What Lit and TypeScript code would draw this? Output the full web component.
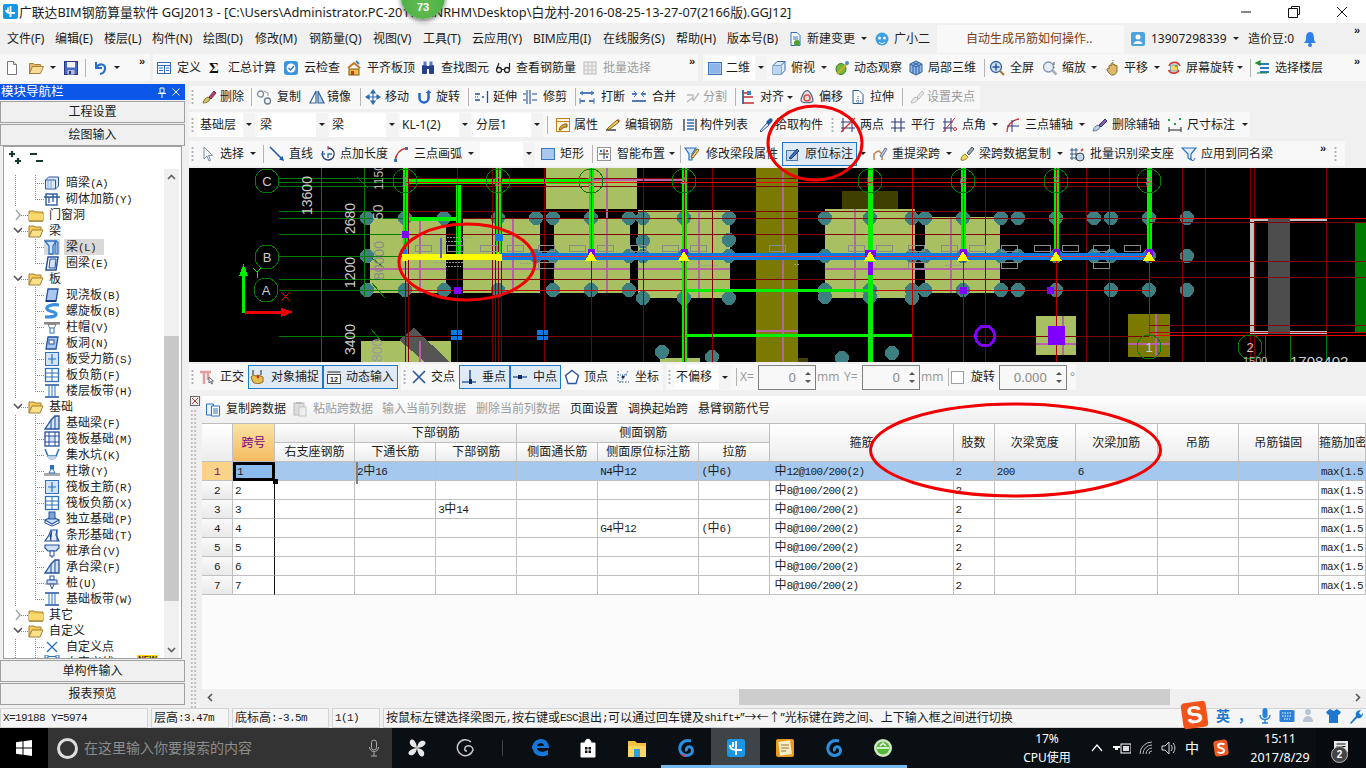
import { LitElement, html, css, TemplateResult } from "lit";
import { customElement } from "lit/decorators.js";
import { unsafeSVG } from "lit/directives/unsafe-svg.js";

const IC: Record<string, string> = {
  new: `<path d="M3.5 1.5h6l3 3v10h-9z" fill="#fff" stroke="#777"/><path d="M9.5 1.5v3h3" fill="#ddd" stroke="#777"/>`,
  open: `<path d="M1.5 13.5v-10h4l1 1h6v2" fill="#e9b860" stroke="#a5803a"/><path d="M1.5 13.5l3-7h11l-3 7z" fill="#f9dd96" stroke="#a5803a"/>`,
  save: `<rect x="1.5" y="1.5" width="13" height="13" fill="#4a68c8" stroke="#26387e"/><rect x="4" y="2" width="8" height="5.5" fill="#f2f2f2"/><rect x="4.5" y="10" width="7" height="4.5" fill="#b9bfd6"/><rect x="6" y="11" width="2" height="3" fill="#26387e"/>`,
  undo: `<path d="M4 2v6h6" fill="none" stroke="#2a6fc8" stroke-width="2"/><path d="M4.5 7.5c3-5 9-3.500 8.500 1.500-.3 3-2.500 4.500-5 5" fill="none" stroke="#2a6fc8" stroke-width="2.200"/>`,
  def: `<rect x="1.500" y="2.500" width="13" height="11" fill="#fff" stroke="#2e6db4"/><path d="M1.500 5.500h13M8.500 5.500v8M3 8h4M3 10.500h4M10 8h3M10 10.500h3" stroke="#2e6db4"/>`,
  sigma: `<text x="8" y="13" font-size="15" font-weight="700" text-anchor="middle" font-family="Liberation Serif" fill="#111">Σ</text>`,
  cloud: `<rect x="1" y="1" width="14" height="14" rx="3" fill="#3c93e0"/><circle cx="8" cy="8" r="4.500" fill="#fff"/><path d="M5.500 8l2 2 3.500-4" fill="none" stroke="#2b7fd0" stroke-width="1.500"/>`,
  flat: `<path d="M2 8l6-5 6 5" fill="none" stroke="#c8771e" stroke-width="2"/><rect x="3" y="9" width="10" height="6" fill="#f0c040" stroke="#7d5a1a"/><rect x="5" y="11" width="3" height="4" fill="#c03a20"/><path d="M10 1l3 3" stroke="#3a80c8" stroke-width="2"/>`,
  find: `<rect x="2" y="5" width="5" height="9" rx="1" fill="#24408f"/><rect x="9" y="5" width="5" height="9" rx="1" fill="#24408f"/><rect x="3.500" y="1.500" width="3" height="4" fill="#5a7ac8"/><rect x="9.500" y="1.500" width="3" height="4" fill="#5a7ac8"/><rect x="6" y="6" width="4" height="3" fill="#24408f"/>`,
  glass: `<circle cx="4" cy="10" r="2.500" fill="none" stroke="#222" stroke-width="1.300"/><circle cx="12" cy="10" r="2.500" fill="none" stroke="#222" stroke-width="1.300"/><path d="M6.500 9.500h3M2 8l2-5M14.500 10V3" stroke="#222" stroke-width="1.200" fill="none"/>`,
  batch: `<rect x="2" y="2" width="12" height="12" fill="#eee" stroke="#bbb"/><path d="M2 6h12M2 10h12M6 2v12M10 2v12" stroke="#c4c4c4"/>`,
  sq: `<rect x="1.500" y="2.500" width="13" height="12" fill="#a8c8f0" stroke="#3c74c4"/><rect x="3" y="4" width="10" height="9" fill="#8db5ea"/>`,
  box3: `<path d="M2 5.500l4-4h8v9l-4 4H2z" fill="#dbe9f8" stroke="#3c6fa8"/><path d="M2 5.500h8v9M10 5.500l4-4" fill="none" stroke="#3c6fa8"/><path d="M2 5.500h8v9H2z" fill="#bcd6f2"/>`,
  orbit: `<ellipse cx="7" cy="9" rx="5" ry="5.500" fill="#76b740" stroke="#3c7a20"/><path d="M3 14L14 3" stroke="#c8b020" stroke-width="2"/><circle cx="13" cy="3" r="2" fill="#4d8fd8"/>`,
  cube: `<path d="M8 1l6 3v8l-6 3-6-3V4z" fill="#8fb8e8" stroke="#33609c"/><path d="M2 4l6 3 6-3M8 7v8M5 2.500l6 3M11 2.500l-6 3M5 5.500v8M11 5.500v8" fill="none" stroke="#33609c"/>`,
  full: `<circle cx="7" cy="7" r="5.500" fill="#cfe0f6" stroke="#31619c" stroke-width="1.300"/><path d="M7 3.500v7M3.500 7h7" stroke="#2455a0" stroke-width="1.500"/><path d="M11 11l4 4" stroke="#a07830" stroke-width="2"/>`,
  zoom: `<circle cx="6.500" cy="7" r="5" fill="#e8eef6" stroke="#8296b4" stroke-width="1.300"/><path d="M10.500 10.500l4 4" stroke="#a8b0b8" stroke-width="2.500"/><path d="M12 2v3M12 7v1" stroke="#555"/>`,
  pan: `<path d="M4 9V6c0-1 2-1 2 0V4c0-1 2-1 2 0v1c0-1 2-1 2 0v1c0-1 2-1 2 0v5c0 2-2 4-4 4-2.500 0-3-1-4-2L2 10c-.6-1 1-2 2-1z" fill="#dfb96a" stroke="#8a6a28"/><path d="M8 0v3" stroke="#555" stroke-dasharray="1 1"/>`,
  spin: `<path d="M3 6a6 6 0 0 1 11 0M13 10A6 6 0 0 1 2.500 10" fill="none" stroke="#d83a30" stroke-width="1.600"/><rect x="4.500" y="5" width="7" height="6" fill="#f4d860" stroke="#80a0c0"/><circle cx="10" cy="6" r="1" fill="#38a038"/>`,
  floor: `<path d="M5 4h9M5 8h9M5 12h9" stroke="#2a7ac0" stroke-width="2"/><path d="M1 3l4-2v4zM2 13h10" stroke="#1e8a30" fill="#1e8a30" stroke-width="1.200"/>`,
  del: `<path d="M2 14c1-3 2-5 5-6l2 2c-1 3-4 4-7 4z" fill="#d8c060" stroke="#8a7a30"/><path d="M8 8l5-6 2 2-5 6z" fill="#c04050" stroke="#5a3a80"/>`,
  copy: `<circle cx="4.500" cy="5" r="3" fill="none" stroke="#7a8aa0" stroke-width="1.300"/><circle cx="11.500" cy="12" r="3" fill="none" stroke="#6a7a90" stroke-width="1.300"/><path d="M8 2l4 2v3" fill="none" stroke="#999"/>`,
  mirror: `<path d="M7 2v12H1z" fill="#fff" stroke="#35639c" stroke-width="1.200"/><path d="M9 2v12h6z" fill="#b9d0ec" stroke="#35639c" stroke-width="1.200"/>`,
  move: `<path d="M8 1v14M1 8h14M8 1L6 4h4zM8 15l-2-3h4zM1 8l3-2v4zM15 8l-3-2v4z" fill="#2e6db4" stroke="#2e6db4" stroke-width="1.200"/>`,
  rot: `<path d="M3.500 4v5a4.500 4.500 0 0 0 9 0V3" fill="none" stroke="#2a68c4" stroke-width="2.500"/><path d="M12.500 1l-3 3h6z" fill="#2a68c4"/>`,
  ext: `<path d="M1 5h5M1 11h5M8 8h2M13.500 2v12" stroke="#20509c" stroke-width="1.300"/><path d="M1 8h4" stroke="#20509c" stroke-dasharray="1 1"/>`,
  trim: `<path d="M8 1v14M5 1v14" stroke="#20509c" stroke-width="1.100"/><path d="M1 5h3M1 11h3M10 5h5M10 11h5" stroke="#20509c"/>`,
  brk: `<path d="M1 4h14M1 12h5M10 12h5" stroke="#20509c" stroke-width="1.300"/><path d="M4 2l-3 2 3 2M12 2l3 2-3 2M1 9v6M15 9v6" fill="none" stroke="#3a80c8"/>`,
  merge: `<path d="M1 12h14M1 5h5M10 5h5" stroke="#20509c" stroke-width="1.300"/><path d="M3 2l3 3-3 3M13 2l-3 3 3 3" fill="none" stroke="#3a80c8"/>`,
  split: `<path d="M2 13l5-4 2 2 5-7M2 6h6v6" fill="none" stroke="#bbb" stroke-width="1.300"/>`,
  align: `<path d="M3 1v14" stroke="#20509c" stroke-width="1.600"/><path d="M3 4h7M3 8h10M3 14h11" stroke="#c03030" stroke-width="1.600"/><rect x="7" y="2" width="4" height="4" fill="#3a80c8"/>`,
  offset: `<path d="M8 1.500c4 1 6 8 6 10 0 3-12 3-12 0 0-2 2-9 6-10z" fill="#f4e0d8" stroke="#4a6a8a" stroke-width="1.200"/><circle cx="8" cy="9" r="3" fill="none" stroke="#d85050" stroke-width="1.500"/>`,
  stretch: `<path d="M3 1.500h6l4 4v9H3z" fill="#fff" stroke="#2b5a94"/><path d="M8 7v7M6 12h5" stroke="#2b5a94" stroke-dasharray="1 1"/>`,
  grip: `<path d="M2 14c1-3 2-5 5-6l2 2c-1 3-4 4-7 4zM8 8l5-6 2 2-5 6z" fill="#e8e8e8" stroke="#bbb"/>`,
  prop: `<rect x="1.500" y="1.500" width="13" height="13" fill="#fff6dc" stroke="#c87f20"/><path d="M1.500 4.500h13" stroke="#c87f20"/><path d="M4 13c1-4 3-6 8-6v3c-3 0-5 1-6 3z" fill="#d8a040" stroke="#806020"/>`,
  edit: `<path d="M1 13h10" stroke="#222" stroke-width="1.300"/><path d="M3 11l9-8 2 2-9 7-3 1z" fill="#f0d050" stroke="#806020"/><path d="M12 3l1-1 2 2-1 1" fill="#c04030"/>`,
  list: `<path d="M2 2v12M14 2v12" stroke="#333" stroke-width="1.300"/><path d="M5 3h7M5 6h7M5 9h7M5 12h7" stroke="#2e6db4" stroke-width="1.500"/>`,
  pick: `<path d="M3 15l-1-1 7-8 2 2z" fill="#dbe9f8" stroke="#2a5a9c"/><path d="M8 5l3-3c2-2 5 1 3 3l-3 3z" fill="#2a5a9c"/>`,
  twop: `<path d="M3 1v14M12 1v14M1 5h14M1 11h14" stroke="#2a3a78"/><path d="M1 15L15 1" stroke="#d03030" stroke-width="1.200"/>`,
  par: `<path d="M5 1v14M11 1v14M1 5h14M1 11h14" stroke="#2a3a78" stroke-width="1.100"/>`,
  ang: `<path d="M3 1v14M9 1v14M1 5h10M1 11h10" stroke="#2a3a78"/><path d="M1 15L13 1" stroke="#d03030"/><circle cx="13" cy="12" r="1.500" fill="none" stroke="#d03030"/>`,
  arcx: `<path d="M1 15c0-7 5-12 12-13" fill="none" stroke="#d03030" stroke-width="1.300"/><path d="M6 3v12M1 9h12" stroke="#2a3a78"/>`,
  delx: `<path d="M1 14c1-3 2-5 5-6l2 2c-1 3-4 4-7 4z" fill="#bcd0e6" stroke="#5a7a9a"/><path d="M7 8l6-6 2 2-6 6z" fill="#7c5fb0" stroke="#3a3a80"/>`,
  dim: `<path d="M2 10v5M14 10v5M2 13h12" stroke="#222"/><rect x="1" y="2" width="2" height="2" fill="#20a040"/><rect x="12" y="1" width="2" height="2" fill="#20a040"/><rect x="7" y="6" width="2" height="2" fill="#20a040"/>`,
  cur: `<path d="M5 1v12l3-3 2 5 1.500-.6-2-5h4z" fill="#fff" stroke="#7a8aa0"/>`,
  line: `<path d="M1 1l12 12" stroke="#1e5aa8" stroke-width="1.600"/><path d="M15 15l-5-1.500 3.500-3.500z" fill="#1e5aa8"/>`,
  ptlen: `<path d="M8 2a6 6 0 1 1-5 3" fill="none" stroke="#2a3a78" stroke-width="1.300"/><path d="M8 0v4" stroke="#d03030"/><path d="M2 8h3M8 12v-4h4" fill="none" stroke="#2e6db4" stroke-width="1.300"/>`,
  arc3: `<path d="M2 15C3 8 7 3 14 2" fill="none" stroke="#c03030" stroke-width="1.500"/><rect x="1" y="13" width="3" height="3" fill="#3a70b0"/><rect x="12" y="1" width="3" height="3" fill="#3a70b0"/>`,
  rect: `<rect x="1.500" y="2.500" width="13" height="11" fill="#a8c8f0" stroke="#3c74c4"/>`,
  smart: `<rect x="1.500" y="1.500" width="13" height="13" fill="#fff" stroke="#333" stroke-dasharray="1 1"/><path d="M8 3v10M3 8h10" stroke="#333"/><rect x="4" y="4" width="2" height="2" fill="#2a70c0"/><rect x="10" y="10" width="2" height="2" fill="#2a70c0"/><rect x="10" y="4" width="2" height="2" fill="#c84040"/>`,
  funp: `<path d="M1 2h11L8 8v6H5V8z" fill="#cfe2f8" stroke="#2a70c0" stroke-width="1.200"/><path d="M7 11l6-8 2 1-6 8z" fill="#f0d050" stroke="#806020"/>`,
  inpos: `<rect x="1.500" y="4.500" width="11" height="10" fill="#c8d8ec" stroke="#4a78b0"/><path d="M4 12l8-9 2 2-8 8z" fill="#3a70c0" stroke="#20406a"/>`,
  relift: `<path d="M2 14V8c2-2 4-3 5-3l3 3v6" fill="none" stroke="#c87f50" stroke-width="1.500"/><path d="M8 10l5-8 2 1-5 8z" fill="#b4c8e4" stroke="#6a7a9a"/>`,
  brush: `<path d="M2 14c0-3 2-5 4-6l3 3c-1 2-4 4-7 3z" fill="#f0d860" stroke="#888020"/><path d="M8 7l5-6 2 2-5 6z" fill="#9aa8b8" stroke="#555"/>`,
  recog: `<path d="M1 4h8M1 8h8M1 12h8M3 2v12M7 2v12" stroke="#345a8c"/><circle cx="11" cy="11" r="4" fill="#c0d4ea" stroke="#444"/><path d="M14 3l-2 2" stroke="#d04040" stroke-width="2"/>`,
  fun: `<path d="M1 2h14l-5 6v6l-3-2 0-4z" fill="#e2eefb" stroke="#2a70c0" stroke-width="1.200"/><path d="M9 12l3 3 2-3" fill="none" stroke="#2a70c0"/>`,
  ortho: `<path d="M1 3h11M5 3v12M9 3v8" stroke="#e0a0a0" stroke-width="2.500" fill="none"/><path d="M10 8v6l1.500-1.500 1 2.500 1-.4-1-2.500h2z" fill="#fff" stroke="#667"/>`,
  snap: `<path d="M3 1v5M11 1v5" stroke="#222"/><path d="M1 8c2-2 3-2 5-1l2-1 5 2v5c-3 2-8 2-10 0z" fill="#e8c050" stroke="#8a6a20"/><circle cx="8" cy="8" r="1.400" fill="#c03030"/>`,
  dyn: `<rect x="1.500" y="2" width="13" height="2" fill="#888"/><rect x="1.500" y="5.500" width="13" height="9" fill="#fff" stroke="#444"/><text x="8" y="13" font-size="7" font-weight="700" text-anchor="middle" font-family="Liberation Sans" fill="#222">12</text>`,
  x: `<path d="M2 2l12 12M14 2L2 14" stroke="#2a5aa0" stroke-width="1.700"/>`,
  perp: `<path d="M1 13h14" stroke="#2a5aa0" stroke-width="1.400"/><path d="M9 1v11" stroke="#2a5aa0" stroke-width="1.600"/><rect x="8" y="10" width="3" height="5" fill="#1a2a60"/>`,
  mid: `<path d="M1 8h14" stroke="#2a5aa0" stroke-width="1.400"/><rect x="6" y="6" width="4" height="4" fill="#1a2a60"/>`,
  vert: `<path d="M8 1.500l6.500 5-2.500 8H4l-2.500-8z" fill="#fff" stroke="#2a5aa0" stroke-width="1.400"/>`,
  coord: `<path d="M3 2v11h11" fill="none" stroke="#2a5aa0" stroke-dasharray="1.500 1.500"/><path d="M13 2L5 14M3 6h10" stroke="#2a5aa0" stroke-dasharray="1 1"/><circle cx="8" cy="8" r="1.500" fill="#1a2a60"/>`,
  doc: `<path d="M4 1.500h6l3 3v10H4z" fill="#fff" stroke="#2a70c0"/><path d="M6 6h5M6 8h5" stroke="#2a70c0"/><circle cx="10" cy="12" r="3" fill="#50a030"/>`,
  bot: `<circle cx="8" cy="8" r="6.500" fill="#3c9fe8"/><circle cx="5.500" cy="7" r="1.500" fill="#fff"/><circle cx="10.500" cy="7" r="1.500" fill="#fff"/><path d="M5 11c2 2 4 2 6 0" stroke="#fff" fill="none"/>`,
  user: `<rect x="1" y="1" width="14" height="14" rx="2" fill="#4ca3dd"/><circle cx="8" cy="6" r="2.500" fill="#fff"/><path d="M3.500 13c.5-4 8.500-4 9 0z" fill="#fff"/>`,
  bell: `<path d="M8 1c3 0 4 3 4 6 0 3 1 4 2 5H2c1-1 2-2 2-5 0-3 1-6 4-6z" fill="#2f80e8"/><circle cx="8" cy="14" r="2" fill="#2f80e8"/>`,
  copyd: `<path d="M1.500 3h7v11h-7z" fill="#e8f1fb" stroke="#2a70c0"/><path d="M6.500 5h8v10h-8z" fill="#fff" stroke="#2a70c0"/><path d="M8 8h5M8 10h5M8 12h5" stroke="#2a70c0"/>`,
  pasted: `<rect x="2" y="2" width="10" height="12" fill="#ddd" stroke="#bbb"/><rect x="7" y="6" width="7" height="9" fill="#eee" stroke="#c4c4c4"/><rect x="4" y="1" width="6" height="2" fill="#bbb"/>`,
  /* tree */
  darkb: `<path d="M1.500 5l3-3h10v9l-3 3h-10z" fill="#dbe7f6" stroke="#2a5a9c"/><path d="M1.500 5h10v9" fill="none" stroke="#2a5a9c"/><path d="M4 5v9M7 5v9" stroke="#7aa4d8"/>`,
  wall: `<rect x="2" y="3" width="11" height="11" fill="#fff" stroke="#2a5a9c" stroke-width="1.400"/><path d="M0 6h16M5 6v6M9 3v8" stroke="#2a5a9c" stroke-width="1.300"/>`,
  fc: `<path d="M1 14V4h5l1 1h8v9z" fill="#f5cc58" stroke="#a08030"/><path d="M1 7h14v7H1z" fill="#f9d96e"/><path d="M1 14h14" stroke="#a08030" stroke-width="1.300"/>`,
  fo: `<path d="M1 14V3h5l1 1h6v3" fill="#f5cc58" stroke="#a08030"/><path d="M1 14l3-7h11l-3 7z" fill="#fbe08a" stroke="#a08030"/>`,
  beam: `<path d="M1 2h11l-3 5v8H5V7z" fill="#cfe2f8" stroke="#2a70c0" stroke-width="1.300"/><path d="M12 2l2 1v12h-3V7z" fill="#8db5ea" stroke="#2a70c0"/>`,
  ring: `<path d="M4 2h10l-2 13H2z" fill="#fff" stroke="#2450a0" stroke-width="1.500"/><path d="M6 4h6l-1 9H5z" fill="#cfe2f8" stroke="#2450a0"/>`,
  slab: `<path d="M4 2h10l-2 12H2z" fill="#a8c8f0" stroke="#2450a0" stroke-width="1.300"/><path d="M2 14h10" stroke="#123a80" stroke-width="2"/>`,
  spiral: `<path d="M15 2C8 1 2 3 3 6s9 2 9 5-5 3-11 3" fill="none" stroke="#3a8ee0" stroke-width="3.200"/>`,
  cap: `<rect x="0" y="3" width="16" height="2.500" fill="#888"/><path d="M4 5.500h8l-2 4H6z" fill="#fff" stroke="#888"/><rect x="6" y="9" width="4" height="5" fill="#fff" stroke="#2a70c0"/>`,
  hole: `<path d="M4 2h10l-2 12H2z" fill="#a8c8f0" stroke="#2450a0" stroke-width="1.300"/><rect x="5" y="5" width="5" height="4" fill="#fff" stroke="#2450a0"/>`,
  rb: `<rect x="1.500" y="1.500" width="13" height="13" fill="#d4e4f8" stroke="#2a70c0"/><path d="M8 3v10M4 8h8" stroke="#2a70c0" stroke-width="1.200"/>`,
  nb: `<rect x="1.500" y="1.500" width="13" height="13" fill="#fff" stroke="#2a70c0" stroke-width="1.300"/><path d="M8 1.500v13M1.500 6h13M1.500 10h13" stroke="#2a70c0"/>`,
  band: `<path d="M1 2h14M1 14h14" stroke="#2450a0" stroke-width="1.600"/><path d="M5 2v12M11 2v12M8 2v12" stroke="#2a70c0"/>`,
  fbeam: `<path d="M1 14l6-9 4-4h4v13z" fill="#cfe2f8" stroke="#2450a0" stroke-width="1.300"/><path d="M7 5v9M11 1v13" stroke="#2450a0"/>`,
  raft: `<rect x="1" y="1" width="14" height="14" fill="#fff" stroke="#2450a0" stroke-width="1.300"/><rect x="5" y="5" width="6" height="6" fill="#cfe2f8" stroke="#2450a0"/><path d="M1 5h4M11 5h4M1 11h4M11 11h4M5 1v4M11 1v4M5 11v4M11 11v4" stroke="#2450a0"/>`,
  pit: `<path d="M1 2l3 7h8l3-7" fill="none" stroke="#2a70c0" stroke-width="1.500"/><path d="M3 9c2 5 8 5 10 0z" fill="#bcd6f2" stroke="#8aa8c8" stroke-dasharray="1 1"/>`,
  pier: `<rect x="0" y="10" width="16" height="3" fill="#aaa"/><path d="M5 10l2-4h2l2 4z" fill="#fff" stroke="#2a70c0"/><rect x="6" y="2" width="4" height="4" fill="#2a70c0"/>`,
  ind: `<path d="M1 9l7-3 7 3-7 4z" fill="#cfe2f8" stroke="#2450a0" stroke-width="1.200"/><path d="M1 9v3l7 3 7-3V9" fill="none" stroke="#2450a0"/><rect x="5" y="1" width="6" height="7" fill="#7aa4d8" stroke="#2450a0"/>`,
  strip: `<path d="M1 14l4-6 2-5h6l-1 5 3 6z" fill="#e2eefb" stroke="#2450a0" stroke-width="1.200"/><path d="M7 14l-1-5 2-5M13 3v11" stroke="#2450a0"/>`,
  cap2: `<path d="M1 2h14v3l-3 3H4L1 5z" fill="#cfe2f8" stroke="#2450a0" stroke-width="1.200"/><rect x="6" y="8" width="4" height="5" fill="#fff" stroke="#2450a0"/><path d="M8 13v2" stroke="#2450a0"/>`,
  pile: `<rect x="6" y="1" width="4" height="4" fill="#fff" stroke="#2450a0"/><path d="M3 5h10v4H3z" fill="#cfe2f8" stroke="#2450a0"/><path d="M6 9h4l-2 5z" fill="#fff" stroke="#2450a0"/><path d="M1 9h14" stroke="#888"/>`,
  cross: `<path d="M3 3l10 10M13 3L3 13" stroke="#2a70c0" stroke-width="1.400"/>`,
  cline: `<rect x="1" y="0" width="3" height="3" fill="none" stroke="#2a70c0"/><rect x="12" y="0" width="3" height="3" fill="none" stroke="#2a70c0"/><path d="M4 1.500h8" stroke="#2a70c0"/>`,
  plus: `<path d="M4 1v6M1 4h6M10 8v6M7 11h6" stroke="#153a2c" stroke-width="2.200"/>`,
  minus: `<path d="M1 4h7M7 11h7" stroke="#153a2c" stroke-width="2.200"/>`,
};

function ic(name: string, size = 16): TemplateResult {
  return html`<svg class="ic" width=${size} height=${size} viewBox="0 0 16 16">${unsafeSVG(IC[name] || "")}</svg>`;
}

const caret = html`<i class="caret"></i>`;

type Atom = any[];
function left(a: Atom): number {
  switch (a[0]) {
    case "i": return a[1] - 8;
    case "c": return a[1] - 3;
    case "d": return a[1] - 2;
    default: return a[1];
  }
}
function atom(a: Atom): TemplateResult {
  switch (a[0]) {
    case "i": return ic(a[2]);
    case "t": return html`<span class=${a[3] ? "dis" : ""}>${a[2]}</span>`;
    case "c": return caret;
    case "s": return html`<i class="sep"></i>`;
    case "d": return html`<i class="dots"></i>`;
    case "o": return html`<span class="more">»</span>`;
    case "f": return html`<span class="combo" style="width:${a[2] - a[1]}px"><span class="field">${a[4] ? ic(a[4]) : ""}${a[3]}</span><span class="drop">${caret}</span></span>`;
    case "b": return html`<span class="box" style="width:${a[2] - a[1]}px">${atoms(a[3], a[1] + 1, a[2] - 1)}</span>`;
    case "n": return html`<span class="num" style="width:${a[2] - a[1]}px"><span>${a[3]}</span><span class="spin"><i class="up"></i><i class="dn"></i></span></span>`;
    case "k": return html`<i class="chk"></i>`;
    default: return html``;
  }
}
function atoms(list: Atom[], start: number, end: number): TemplateResult[] {
  const out: TemplateResult[] = [];
  if (list.length && left(list[0]) > start) out.push(html`<span class="a" style="width:${left(list[0]) - start}px"></span>`);
  list.forEach((a, i) => {
    const w = (i < list.length - 1 ? left(list[i + 1]) : end) - left(a);
    out.push(html`<span class="a" style="width:${w}px">${atom(a)}</span>`);
  });
  return out;
}
type Strip = [number, number, Atom[], string?];
function strips(list: Strip[], start: number): TemplateResult[] {
  let pos = start;
  const out: TemplateResult[] = [];
  for (const [x0, x1, at, cls] of list) {
    if (x0 > pos) out.push(html`<span class="a" style="width:${x0 - pos}px"></span>`);
    out.push(html`<div class="strip ${cls || ""}" style="width:${x1 - x0}px">${atoms(at, x0, x1)}</div>`);
    pos = x1;
  }
  return out;
}

const MENU: Strip[] = [
  [0, 937, [["t", 7, "文件(F)"], ["t", 55, "编辑(E)"], ["t", 104, "楼层(L)"], ["t", 152, "构件(N)"], ["t", 203, "绘图(D)"], ["t", 255, "修改(M)"], ["t", 309, "钢筋量(Q)"], ["t", 373, "视图(V)"], ["t", 423, "工具(T)"], ["t", 472, "云应用(Y)"], ["t", 533, "BIM应用(I)"], ["t", 603, "在线服务(S)"], ["t", 676, "帮助(H)"], ["t", 727, "版本号(B)"], ["i", 795, "doc"], ["t", 807, "新建变更"], ["c", 864], ["i", 882, "bot"], ["t", 894, "广小二"]], "plain"],
  [937, 1124, [["t", 966, "自动生成吊筋如何操作.."]], "tip"],
  [1124, 1366, [["i", 1138, "user"], ["t", 1151, "13907298339"], ["c", 1236], ["t", 1248, "造价豆:0"], ["i", 1310, "bell"], ["o", 1354]], "plain"],
];
const TB1: Strip[] = [
  [0, 150, [["i", 12, "new"], ["i", 36, "open"], ["c", 53], ["i", 71, "save"], ["s", 85], ["i", 100, "undo"], ["c", 117], ["o", 139]]],
  [153, 698, [["i", 164, "def"], ["t", 177, "定义"], ["i", 214, "sigma"], ["t", 228, "汇总计算"], ["i", 291, "cloud"], ["t", 304, "云检查"], ["i", 354, "flat"], ["t", 367, "平齐板顶"], ["i", 428, "find"], ["t", 441, "查找图元"], ["i", 503, "glass"], ["t", 516, "查看钢筋量"], ["i", 590, "batch"], ["t", 603, "批量选择", true], ["o", 689]]],
  [703, 1366, [["f", 705, 767, "二维", "sq"], ["i", 779, "box3"], ["t", 791, "俯视"], ["c", 824], ["i", 842, "orbit"], ["t", 854, "动态观察"], ["i", 916, "cube"], ["t", 928, "局部三维"], ["s", 984], ["i", 997, "full"], ["t", 1010, "全屏"], ["i", 1050, "zoom"], ["t", 1062, "缩放"], ["c", 1094], ["i", 1113, "pan"], ["t", 1124, "平移"], ["c", 1157], ["i", 1174, "spin"], ["t", 1186, "屏幕旋转"], ["c", 1240], ["s", 1250], ["i", 1263, "floor"], ["t", 1275, "选择楼层"], ["o", 1354]]],
];
const R2: Strip[] = [[189, 980, [["d", 193], ["i", 209, "del"], ["t", 220, "删除"], ["s", 251], ["i", 264, "copy"], ["t", 277, "复制"], ["i", 317, "mirror"], ["t", 327, "镜像"], ["s", 360], ["i", 373, "move"], ["t", 385, "移动"], ["i", 424, "rot"], ["t", 436, "旋转"], ["s", 468], ["i", 482, "ext"], ["t", 493, "延伸"], ["i", 530, "trim"], ["t", 543, "修剪"], ["s", 575], ["i", 587, "brk"], ["t", 601, "打断"], ["i", 639, "merge"], ["t", 652, "合并"], ["i", 693, "split"], ["t", 703, "分割", true], ["s", 735], ["i", 748, "align"], ["t", 760, "对齐"], ["c", 790], ["i", 807, "offset"], ["t", 819, "偏移"], ["i", 858, "stretch"], ["t", 870, "拉伸"], ["s", 902], ["i", 917, "grip"], ["t", 927, "设置夹点", true]]]];
const R3: Strip[] = [[189, 1250, [["d", 193], ["f", 198, 255, "基础层"], ["f", 258, 328, "梁"], ["f", 330, 398, "梁"], ["f", 400, 471, "KL-1(2)"], ["f", 474, 543, "分层1"], ["s", 547], ["i", 563, "prop"], ["t", 574, "属性"], ["i", 613, "edit"], ["t", 625, "编辑钢筋"], ["i", 690, "list"], ["t", 700, "构件列表"], ["i", 766, "pick"], ["t", 775, "拾取构件"], ["d", 833], ["i", 848, "twop"], ["t", 860, "两点"], ["i", 898, "par"], ["t", 911, "平行"], ["i", 950, "ang"], ["t", 962, "点角"], ["c", 995], ["i", 1014, "arcx"], ["t", 1025, "三点辅轴"], ["c", 1082], ["i", 1100, "delx"], ["t", 1112, "删除辅轴"], ["i", 1175, "dim"], ["t", 1187, "尺寸标注"], ["c", 1245]]]];
const R4: Strip[] = [[189, 1345, [["d", 193], ["i", 207, "cur"], ["t", 220, "选择"], ["c", 253], ["s", 263], ["i", 277, "line"], ["t", 289, "直线"], ["i", 328, "ptlen"], ["t", 340, "点加长度"], ["i", 401, "arc3"], ["t", 414, "三点画弧"], ["c", 471], ["f", 480, 535, ""], ["i", 548, "rect"], ["t", 560, "矩形"], ["s", 592], ["i", 604, "smart"], ["t", 617, "智能布置"], ["c", 672], ["s", 680], ["i", 692, "funp"], ["t", 706, "修改梁段属性"], ["b", 782, 857, [["i", 793, "inpos"], ["t", 805, "原位标注"]]], ["c", 863], ["i", 880, "relift"], ["t", 892, "重提梁跨"], ["c", 949], ["i", 967, "brush"], ["t", 979, "梁跨数据复制"], ["c", 1060], ["i", 1077, "recog"], ["t", 1090, "批量识别梁支座"], ["i", 1189, "fun"], ["t", 1201, "应用到同名梁"], ["o", 1320], ["d", 1336]]]];
const SNAP: Strip[] = [
  [189, 399, [["d", 193], ["i", 207, "ortho"], ["t", 220, "正交"], ["b", 248, 323, [["i", 258, "snap"], ["t", 271, "对象捕捉"]]], ["b", 323, 398, [["i", 334, "dyn"], ["t", 346, "动态输入"]]]]],
  [401, 663, [["d", 405], ["i", 419, "x"], ["t", 431, "交点"], ["b", 459, 510, [["i", 469, "perp"], ["t", 482, "垂点"]]], ["b", 510, 561, [["i", 520, "mid"], ["t", 533, "中点"]]], ["i", 572, "vert"], ["t", 584, "顶点"], ["i", 623, "coord"], ["t", 635, "坐标"]]],
  [666, 1076, [["d", 670], ["f", 674, 731, "不偏移"], ["s", 736], ["t", 740, "X=", true], ["n", 758, 816, "0"], ["t", 817, "mm", true], ["t", 844, "Y=", true], ["n", 862, 920, "0"], ["t", 921, "mm", true], ["s", 948], ["k", 951], ["t", 971, "旋转"], ["n", 999, 1067, "0.000"], ["t", 1070, "°", true]]],
];
const TT: Strip[] = [[202, 1366, [["i", 213, "copyd"], ["t", 226, "复制跨数据"], ["i", 300, "pasted"], ["t", 313, "粘贴跨数据", true], ["t", 382, "输入当前列数据", true], ["t", 476, "删除当前列数据", true], ["t", 570, "页面设置"], ["t", 628, "调换起始跨"], ["t", 698, "悬臂钢筋代号"]], "grad"]];

function mix(s: string): unknown[] {
  return s.split(/([\x00-\x7f]+)/).map((p, i) => (i % 2 ? html`<span class="m">${p}</span>` : p));
}

/* level (0 group / 1 child), label, icon, opened, extra class */
const TREE: [number, string, string, number?, string?][] = [
  [1, "暗梁(A)", "darkb"], [1, "砌体加筋(Y)", "wall", 0, "last"], [0, "门窗洞", "fc", 0], [0, "梁", "fo", 1], [1, "梁(L)", "beam", 0, "sel"], [1, "圈梁(E)", "ring", 0, "last"],
  [0, "板", "fo", 1], [1, "现浇板(B)", "slab"], [1, "螺旋板(B)", "spiral"], [1, "柱帽(V)", "cap"], [1, "板洞(N)", "hole"], [1, "板受力筋(S)", "rb"], [1, "板负筋(F)", "nb"], [1, "楼层板带(H)", "band", 0, "last"],
  [0, "基础", "fo", 1], [1, "基础梁(F)", "fbeam"], [1, "筏板基础(M)", "raft"], [1, "集水坑(K)", "pit"], [1, "柱墩(Y)", "pier"], [1, "筏板主筋(R)", "rb"], [1, "筏板负筋(X)", "nb"], [1, "独立基础(P)", "ind"], [1, "条形基础(T)", "strip"], [1, "桩承台(V)", "cap2"], [1, "承台梁(F)", "fbeam"], [1, "桩(U)", "pile"], [1, "基础板带(W)", "band", 0, "last"],
  [0, "其它", "fc", 0], [0, "自定义", "fo", 1], [1, "自定义点", "cross"], [1, "自定义线(X)", "cline", 0, "cut"],
];

const COLS = [31, 42, 80, 81, 81, 81, 101, 71, 183, 41, 81, 82, 81, 80, 47];
const S = "中";
const ROWS: string[][] = [
  ["1", "", `2${S}16`, "", "", `N4${S}12`, `(${S}6)`, `${S}12@100/200(2)`, "2", "200", "6", "", "", "max(1.5"],
  ["2", "", "", "", "", "", "", `${S}8@100/200(2)`, "2", "", "", "", "", "max(1.5"],
  ["3", "", "", `3${S}14`, "", "", "", `${S}8@100/200(2)`, "2", "", "", "", "", "max(1.5"],
  ["4", "", "", "", "", `G4${S}12`, `(${S}6)`, `${S}8@100/200(2)`, "2", "", "", "", "", "max(1.5"],
  ["5", "", "", "", "", "", "", `${S}8@100/200(2)`, "2", "", "", "", "", "max(1.5"],
  ["6", "", "", "", "", "", "", `${S}8@100/200(2)`, "2", "", "", "", "", "max(1.5"],
  ["7", "", "", "", "", "", "", `${S}8@100/200(2)`, "2", "", "", "", "", "max(1.5"],
];

function canvas(): string {
  let o = "";
  const r = (x: number, y: number, w: number, h: number, f: string) => (o += `<rect x="${x}" y="${y}" width="${w}" height="${h}" fill="${f}"/>`);
  const l = (x1: number, y1: number, x2: number, y2: number, c: string, w = 1) => (o += `<line x1="${x1}" y1="${y1}" x2="${x2}" y2="${y2}" stroke="${c}" stroke-width="${w}"/>`);
  const SLAB = "#a9c062", OLIVE = "#7a7a00";
  r(756, 168, 42, 194, OLIVE);
  ([[370, 219, 76, 74], [463, 218, 77, 75], [554, 218, 76, 75], [638, 210, 92, 88], [546, 168, 91, 41], [825, 209, 90, 89], [925, 217, 75, 76], [361, 341, 90, 21], [1036, 316, 40, 39], [660, 358, 40, 4]] as number[][]).forEach((a) => r(a[0], a[1], a[2], a[3], SLAB));
  r(842, 191, 56, 18, "#3f3f00");
  r(1128, 314, 42, 43, OLIVE);
  r(798, 358, 10, 4, "#3f3f00");
  o += `<polygon points="399,340 414,328 450,362 425,362" fill="#555"/>`;
  const PINK = "#b562a6";
  l(370, 268.5, 446, 268.5, PINK, 2); l(463, 268.5, 540, 268.5, PINK, 2); l(554, 268.5, 630, 268.5, PINK, 2); l(638, 268.5, 730, 268.5, PINK, 2); l(825, 268.5, 1000, 268.5, PINK, 2);
  l(756, 331, 798, 331, PINK, 2); l(1036, 343.5, 1076, 343.5, PINK, 2); l(1128, 343.5, 1170, 343.5, PINK, 2); l(546, 180, 684, 180, PINK, 2);
  ([[420, 219, 293], [513, 218, 293], [607, 168, 293], [699, 210, 298], [855, 209, 298], [951, 217, 293], [1063, 316, 355], [1156, 314, 357], [783, 168, 362], [420, 341, 362]] as number[][]).forEach((a) => l(a[0], a[1], a[0], a[2], PINK, 2));
  /* pile dots */
  const T = "#3d7f80";
  const c = (x: number, y: number, rx = 7, ry = 7) => (o += `<ellipse cx="${x}" cy="${y}" rx="${rx}" ry="${ry}" fill="${T}"/>`);
  [367, 405, 444, 498, 536, 553, 591, 629, 643, 684, 729, 825, 870, 912, 925, 963, 1001, 1018, 1056, 1094, 1111, 1149, 1187].forEach((x) => c(x, 218));
  [367, 536, 553, 629, 643, 684, 729, 825, 912, 925, 963, 1001, 1018, 1056, 1094, 1111, 1149, 1187].forEach((x) => c(x, 256));
  [367, 405, 444, 498, 553, 591, 629, 825, 870, 912, 925, 963, 1001, 1018, 1056, 1111, 1149, 1187].forEach((x) => c(x, 290));
  [[643, 298], [684, 298], [729, 298], [825, 297], [870, 297], [912, 298], [643, 241], [729, 240], [662, 352], [712, 357], [842, 358], [892, 353]].forEach((a) => c(a[0], a[1]));
  /* dark lines */
  const DR = "#800000", DG = "#007a00", RED = "#f00000", G = "#00f000";
  [178, 186, 211, 218, 234, 279, 290, 336].forEach((y) => { l(279, y + 0.5, 405, y + 0.5, DG); l(405, y + 0.5, 1149, y + 0.5, y === 290 ? "#c00000" : DR); });
  l(279, 182.5, 405, 182.5, DG); l(279, 256.5, 405, 256.5, DG); l(321.5, 168, 321.5, 362, DG); l(364.5, 168, 364.5, 296, DG);
  l(357, 177, 368, 188, DG); l(372, 258, 384, 268, DG); l(372, 283, 385, 298, DG); l(371, 329, 381, 341, DG);
  /* bright green members */
  [[405, 168, 257], [498, 168, 257], [591, 168, 257], [684, 168, 362], [870, 168, 362], [963, 168, 257], [1056, 168, 257], [1149, 168, 257], [458, 185, 255]].forEach((a) => r(a[0] - 2, a[1], 5, a[2] - a[1], G));
  r(405, 179, 186, 5, G); r(405, 217, 54, 4, G); r(684, 289, 188, 3, G); r(684, 334, 228, 3, G);
  [405, 408, 457, 492, 495, 498, 501, 544, 591, 643, 684, 712, 912, 963, 985, 1056, 1086, 1109, 1182, 1205, 1250, 1254, 1326].forEach((x) => l(x + 0.5, 168, x + 0.5, 362, x === 963 || x === 1056 || x === 912 ? "#b00000" : DR));
  l(1265.5, 335, 1265.5, 362, DG); l(1290, 335, 1290, 362, DG); l(1326.5, 335, 1326.5, 362, DG);
  l(405, 182.5, 1149, 182.5, RED);
  /* right hand structure */
  r(1250, 218, 77, 3, "#c0c0c0"); r(1250, 331, 77, 3, "#c0c0c0"); r(1250, 218, 4, 116, "#c0c0c0");
  r(1268, 218, 22, 116, "#4d4d4d");
  r(1355, 222, 11, 111, "#007a00");
  l(1149, 218.5, 1366, 218.5, RED); l(1149, 335.5, 1366, 335.5, RED); l(1149.5, 218, 1149.5, 336, RED);
  [222, 261, 277, 325, 332].forEach((y, i) => l(1149, y + 0.5, 1366, y + 0.5, i === 4 ? "#c00000" : DR));
  /* gray boxes */
  const GB = "#8a8a8a";
  [415, 447, 480, 507, 538, 569, 597, 630, 662, 690, 769, 848, 876, 908, 941, 969, 1001, 1034, 1062, 1093, 1124].forEach((x) => (o += `<rect x="${x + 0.5}" y="245.500" width="16" height="6" fill="none" stroke="${GB}"/>`));
  [538, 908, 1001, 1093].forEach((x) => (o += `<rect x="${x + 0.5}" y="262.500" width="16" height="6" fill="none" stroke="${GB}"/>`));
  /* beam */
  r(500, 253, 650, 7, "#0b78e3");
  r(402, 254, 100, 6, "#ffff00");
  l(502, 256.5, 1150, 256.5, "#f03030");
  /* small annotation marks */
  r(440, 238, 2, 20, "#6060c0");
  [[444, 237, 28], [445, 241, 20], [434, 262, 30], [445, 266, 16], [520, 263, 20], [698, 265, 20], [794, 264, 5], [945, 265, 16]].forEach((a) => (o += `<line x1="${a[0]}" y1="${a[1]}" x2="${a[0] + a[2]}" y2="${a[1]}" stroke="#9a9a9a" stroke-dasharray="2 1"/>`));
  /* column markers */
  const PU = "#8000ff";
  [[405, 234], [457, 290], [963, 252], [1056, 252], [1149, 252], [591, 252], [684, 252], [963, 290], [1050, 290]].forEach((a) => r(a[0] - 3, a[1] - 3, 7, 7, PU));
  r(495, 234, 8, 7, "#0b78e3");
  r(865, 250, 11, 7, PU); r(868, 262, 5, 13, PU);
  [591, 684, 870, 963, 1056, 1149].forEach((x) => {
    o += `<polygon points="${x - 6},261 ${x},251 ${x + 6},261" fill="#ffff00"/>`;
  });
  o += `<polygon points="402,261 405,251 408,261" fill="#ffff00"/><polygon points="496,261 498,251 502,261" fill="#ffff00"/>`;
  r(402, 249, 5, 5, "#0b78e3");
  [[457, 335], [543, 335]].forEach((a) => { r(a[0] - 6, a[1] - 5, 11, 10, "#0b78e3"); l(a[0], a[1] - 5, a[0], a[1] + 5, "#000"); l(a[0] - 6, a[1] + 0.5, a[0] + 5, a[1] + 0.5, "#000"); });
  o += `<ellipse cx="985" cy="336" rx="9.500" ry="10" fill="none" stroke="${PU}" stroke-width="3"/>`;
  r(1048, 326, 17, 19, PU);
  /* axis circles */
  const AX = (x: number, y: number, t: string, rr = 12) => { o += `<circle cx="${x}" cy="${y}" r="${rr}" fill="none" stroke="#007a00"/><text x="${x}" y="${y + 5}" text-anchor="middle" font-size="13" font-family="Liberation Sans" fill="#ccc">${t}</text>`; };
  AX(267, 181, "C", 12); AX(267, 257, "B", 12); AX(266, 290, "A", 12);
  [[405, "1"], [498, "2"], [591, "3"], [684, "4"], [870, "5"], [963, "6"], [1056, "7"], [1149, "8"]].forEach((a) => AX(a[0] as number, 181, `<tspan fill="#a77">${a[1]}</tspan>`, 12));
  AX(1149, 347, "1"); AX(1250, 347, "2");
  const V = (x: number, y: number, t: string, f = "#ccc", fs = 14) => (o += `<text transform="translate(${x} ${y}) rotate(-90)" font-size="${fs}" font-family="Liberation Sans" fill="${f}">${t}</text>`);
  V(312, 215, "13600"); V(355, 234, "2680"); V(355, 288, "1200"); V(355, 355, "3400");
  V(383, 190, "1150", "#b8b8b8", 12); V(383, 220, "50", "#b8b8b8", 14); V(384, 280, "80000", "#8a8a8a", 14); V(382, 362, "800", "#9a9a9a", 14);
  o += `<text x="1243" y="365" font-size="11" font-family="Liberation Sans" fill="#bbb">1500</text><text x="1290" y="367" font-size="15" font-family="Liberation Sans" fill="#ccc">1708402</text>`;
  /* UCS */
  r(242, 275, 3, 38, G); o += `<polygon points="243.500,264 239,276 248,276" fill="${G}"/>`;
  r(245, 311, 38, 3, "#f00000"); o += `<polygon points="293,312 281,308 281,317" fill="#f00000"/>`;
  o += `<path d="M253 268l4 4 4-4M257 272v6" fill="none" stroke="${G}"/><path d="M281 292l9 9M290 292l-9 9" stroke="#f00000"/>`;
  return o;
}

@customElement("app-root")
export class AppRoot extends LitElement {
  static styles = css`
    :host { display: block; position: relative; width: 1366px; height: 768px; overflow: hidden; background: #f0f0f0; color: #1c1c1c; font: 12px/16px "Noto Sans", "Noto Sans CJK SC", sans-serif; }
    .title { height: 23px; background: #fff; display: flex; align-items: center; padding-left: 3px; font-size: 12.8px; white-space: nowrap; box-sizing: border-box; }
    .logo { width: 15px; height: 15px; background: #1797e6; border-radius: 2px; flex: none; color: #fff; display: flex; }
    .ttl { flex: none; width: 1203px; padding-left: 1px; }
    .wbtn { flex: none; width: 48px; display: flex; justify-content: center; }
    .row { display: flex; align-items: center; flex: none; }
    .menu { height: 31px; }
    .tb1 { height: 27px; margin-bottom: 3px; }
    .tb1 .strip { height: 100%; }
    .strip { display: flex; align-items: center; background: #f8f8f8; flex: none; height: calc(100% - 3px); white-space: nowrap; }
    .strip.plain { background: transparent; height: 100%; }
    .strip.tip { background: #f8f8f8; color: #7c3a10; height: 28px; }
    .strip.grad { background: linear-gradient(#fff, #f0f0f0); height: 100%; }
    .a { flex: none; display: flex; align-items: center; height: 100%; white-space: nowrap; }
    .ic { flex: none; display: block; }
    .dis { color: #9c9c9c; }
    .more { font: 700 11px/11px "Liberation Sans"; align-self: flex-start; margin-top: 2px; }
    .caret { display: block; width: 0; height: 0; border: 3px solid transparent; border-top: 3px solid #222; border-bottom: 0; }
    .sep { display: block; width: 1px; height: 18px; background: #b5b5b5; }
    .dots { display: block; width: 3px; height: 16px; background: radial-gradient(circle, #b0b0b0 1px, transparent 1.2px) 0 0/3px 4px; }
    .combo { display: flex; height: 24px; flex: none; }
    .field { flex: 1; background: #fff; padding-left: 2px; display: flex; align-items: center; gap: 3px; }
    .drop { width: 12px; background: #f3f3f3; display: flex; align-items: center; justify-content: center; }
    .box { display: flex; height: 24px; flex: none; border: 1px solid #1e7ac8; background: #dfeaf5; box-sizing: border-box; align-items: center; }
    .num { display: flex; align-items: center; justify-content: flex-end; height: 25px; border: 1px solid #808080; box-sizing: border-box; color: #8a8a8a; font-size: 13px; background: #f8f8f8; }
    .spin { display: flex; flex-direction: column; gap: 5px; width: 14px; align-items: center; margin-left: 5px; }
    .up { border: 3px solid transparent; border-top: 0; border-bottom: 3px solid #555; }
    .dn { border: 3px solid transparent; border-bottom: 0; border-top: 3px solid #555; }
    .chk { display: block; width: 11px; height: 11px; border: 1px solid #a0a0a0; background: #fff; }
    .main { height: 624px; display: flex; }
    .nav { width: 185px; flex: none; display: flex; flex-direction: column; height: 621px; }
    .navh { height: 16px; flex: none; background: #0a57e8; color: #fff; display: flex; align-items: center; padding-left: 1px; font-size: 12.500px; }
    .navh span { flex: 1; }
    .navh svg { margin-right: 4px; }
    .nbtn { flex: none; background: #f0f0f0; border: 1px solid #a0a0a0; display: flex; align-items: center; justify-content: center; margin-top: 1px; box-sizing: border-box; height: 22px; }
    .tree { flex: 1; min-height: 0; margin: 0 3px 0 3px; border: 1px solid #a0a0a0; background: #fff; display: flex; flex-direction: column; overflow: hidden; }
    .ttools { height: 22px; flex: none; display: flex; align-items: center; padding-left: 4px; gap: 5px; }
    .tbody { flex: 1; min-height: 0; display: flex; }
    .tlist { flex: 1; overflow: hidden; padding-top: 6px; min-width: 0; }
    .tsb { width: 15px; flex: none; background: #f0f0f0; margin-right: 2px; display: flex; flex-direction: column; align-items: center; position: relative; }
    .tsb .sarrow { height: 16px; display: flex; align-items: center; flex: none; }
    .thumb { position: absolute; top: 167px; left: 0; width: 15px; height: 265px; background: #c8c8c8; }
    .tfill { flex: 1; }
    .tr { height: 16px; display: flex; align-items: center; white-space: nowrap; background-repeat: no-repeat; }
    .m { font: 11px "Liberation Mono", monospace; letter-spacing: -.6px; }
    .lv0 { padding-left: 6px; background-image: repeating-linear-gradient(to right, #888 0 1px, transparent 1px 2px); background-size: 9px 1px; background-position: 15px 50%; }
    .lv0 .chev { width: 16px; flex: none; display: block; }
    .lv0 .ic { margin-left: 2px; margin-right: 5px; }
    .lv1 { padding-left: 40px; background-image: repeating-linear-gradient(to bottom, #888 0 1px, transparent 1px 2px), repeating-linear-gradient(to right, #888 0 1px, transparent 1px 2px), repeating-linear-gradient(to bottom, #888 0 1px, transparent 1px 2px); background-size: 1px 100%, 9px 1px, 1px 100%; background-position: 31px 0, 31px 50%, 11px 0; }
    .lv1.last { background-size: 1px 50%, 9px 1px, 1px 100%; }
    .lv1.cut { align-items: flex-start; }
    .lv1 .ic { margin-right: 4px; }
    .lv1 .lb { padding: 0 2px; }
    .lv1.sel .ic { background: #d9d9d9; }
    .lv1.sel .lb { background: #d9d9d9; padding-right: 8px; }
    .newtag { background: #ffd800; color: #333; font: 700 8px/8px "Liberation Sans"; margin-left: 3px; padding: 0 1px; }
    .work { margin-left: 4px; flex: 1; min-width: 0; display: flex; flex-direction: column; }
    .r2 { height: 26px; } .r3 { height: 29px; } .r4 { height: 29px; }
    .r3 .strip, .r4 .strip { height: 25px; }
    .cv { height: 194px; flex: none; background: #000; display: block; }
    .snap { height: 30px; }
    .snap .strip { height: 26px; }
    .tz { flex: 1; min-height: 0; margin-top: 4px; display: flex; }
    .tdots { width: 13px; flex: none; display: flex; flex-direction: column; align-items: flex-start; padding-left: 1px; box-sizing: border-box; }
    .tdots i { flex: 1; margin-top: 3px; width: 7px; background: radial-gradient(circle, #bcbcbc 1px, transparent 1.2px) 0 0/3.500px 4px; }
    .tm { flex: 1; min-width: 0; display: flex; flex-direction: column; margin-bottom: 3px; }
    .ttb { height: 25px; flex: none; }
    .twrap { flex: 1; min-height: 0; background: #fbfbfb; margin-top: 2px; overflow: hidden; border-top: 1px solid #bdbdbd; position: relative; }
    .hd { position: absolute; top: 55px; width: 5px; height: 5px; background: #000; }
    .hd2 { position: absolute; left: 154px; top: 38px; width: 2px; height: 22px; background: #808080; }
    table { table-layout: fixed; border-collapse: separate; border-spacing: 0; width: 1164px; font-size: 12px; }
    th, td { border-right: 1px solid #c0c0c0; border-bottom: 1px solid #c0c0c0; padding: 0; overflow: hidden; white-space: nowrap; box-sizing: border-box; }
    th { font-weight: 400; background: linear-gradient(#fff, #ececec); }
    .h1 th { height: 19px; } .h2 th { height: 19px; }
    td { height: 19px; background: #fff; padding-left: 2px; line-height: 18px; }
    td.rh { background: linear-gradient(#fafafa, #e9e9e9); text-align: center; padding: 0; }
    tr.on td { background: #a5c8ef; }
    tr.on td.rh { background: #fbd388; color: #800080; }
    th.kh { background: linear-gradient(#fbe3a6, #f4bb5e); color: #800080; }
    td.k { border-right: 1px solid #111; }
    tr.on td.k { background: #8cbcee; outline: 3px solid #000; outline-offset: -3px; padding-left: 4px; }
    td.stir { padding-left: 4px; }
    .hs { height: 16px; flex: none; background: #f0f0f0; display: flex; align-items: center; }
    .hs .track { flex: 1; height: 100%; }
    .hsthumb { width: 431px; height: 16px; background: #cdcdcd; margin-left: 521px; }
    .arr { width: 16px; flex: none; display: flex; justify-content: center; }
    .status { height: 20px; display: flex; gap: 3px; background: #f0f0f0; box-sizing: border-box; }
    .stc { background: #f5f5f5; border: 1px solid #d4d4d4; display: flex; align-items: center; padding-left: 2px; flex: none; box-sizing: border-box; white-space: nowrap; }
    .ime { position: absolute; left: 1182px; top: 701px; height: 28px; display: flex; align-items: center; }
    .ime .sg { width: 25px; height: 26px; background: #f2531b; color: #fff; font: 700 24px/26px "Liberation Sans"; text-align: center; border-radius: 4px; transform: rotate(-8deg); }
    .ime .items { position: absolute; left: 34px; top: 7px; display: flex; gap: 7.5px; align-items: center; color: #1e78d2; font-weight: 700; font-size: 14px; }
    .task { height: 40px; background: #0a0f14; display: flex; color: #fff; }
    .start { width: 48px; flex: none; background: #000; display: flex; align-items: center; justify-content: center; }
    .search { width: 344px; flex: none; background: #333; display: flex; align-items: center; color: #8c8c8c; font-size: 14px; }
    .search .ring { width: 15px; height: 15px; border: 3px solid #ddd; border-radius: 50%; margin: 0 6px 0 9px; flex: none; }
    .search span { flex: 1; }
    .search svg { margin-right: 13px; }
    .ti { flex: none; display: flex; align-items: center; justify-content: center; box-sizing: border-box; border-bottom: 3px solid transparent; padding-top: 3px; }
    .ti.run { border-bottom-color: #76b9ed; background-clip: padding-box; }
    .ti.act { background: #3f4448; }
    .tsep { width: 1px; height: 16px; background: #444; }
    .cpu { width: 48px; margin-left: 116px; flex: none; text-align: center; display: flex; flex-direction: column; justify-content: center; line-height: 19px; white-space: nowrap; align-items: center; }
    .tray { flex: none; display: flex; align-items: center; justify-content: center; }
    .clock { width: 72px; flex: none; text-align: center; display: flex; flex-direction: column; justify-content: center; line-height: 19px; white-space: nowrap; margin-left: 6px; font-size: 12.500px; }
    .notif { flex: 1; display: flex; align-items: center; justify-content: center; background: #070a0e; position: relative; }
    .nbadge { position: absolute; left: 15px; top: 18px; width: 15px; height: 15px; border-radius: 50%; background: #444; border: 1px solid #bbb; color: #fff; font: 700 10px/15px "Liberation Sans"; text-align: center; }
    .badge { position: absolute; left: 401px; top: -25px; width: 44px; height: 44px; border-radius: 50%; background: radial-gradient(circle at 50% 70%, #62bd52, #3da53c); box-shadow: 0 2px 5px rgba(0,0,0,.55); color: #fff; font: 700 11px/12px "Liberation Sans"; display: flex; align-items: flex-end; justify-content: center; padding-bottom: 6px; box-sizing: border-box; }
    .ann { position: absolute; left: 0; top: 0; pointer-events: none; }
  `;

  render() {
    const chev = (open: boolean) => open
      ? html`<svg class="chev" width="16" height="16" viewBox="0 0 16 16"><path d="M4 5l4 4 4-4" fill="none" stroke="#555" stroke-width="1.600"/></svg>`
      : html`<svg class="chev" width="16" height="16" viewBox="0 0 16 16"><path d="M6 3l4 5-4 5" fill="none" stroke="#aaa" stroke-width="1.600"/></svg>`;
    return html`
      <div class="title">
        <span class="logo"><svg width="15" height="15" viewBox="0 0 15 15"><path d="M7.500 2v11M3 6c0 3 2 3 9 3M5 3.500v4" fill="none" stroke="#fff" stroke-width="1.800"/></svg></span>
        <span class="ttl">广联达BIM钢筋算量软件 GGJ2013 - [C:\\Users\\Administrator.PC-2017AANRHM\\Desktop\\白龙村-2016-08-25-13-27-07(2166版).GGJ12]</span>
        <span class="wbtn"><svg width="12" height="12"><path d="M1 6h10" stroke="#111"/></svg></span>
        <span class="wbtn"><svg width="12" height="12"><path d="M3.500 2.500v-2h8v8h-2M.5 2.500h9v9h-9z" fill="none" stroke="#111"/></svg></span>
        <span class="wbtn"><svg width="12" height="12"><path d="M1 1l10 10M11 1L1 11" stroke="#111"/></svg></span>
      </div>
      <div class="row menu">${strips(MENU, 0)}</div>
      <div class="row tb1">${strips(TB1, 0)}</div>
      <div class="main">
        <aside class="nav">
          <div class="navh"><span>模块导航栏</span>
            <svg width="10" height="11" viewBox="0 0 10 11"><path d="M3 1h4v5H3zM1 6.500h8M5 7v4" fill="none" stroke="#fff"/></svg>
            <svg width="10" height="10" viewBox="0 0 10 10"><path d="M1.500 1.500l7 7M8.500 1.500l-7 7" stroke="#fff"/></svg>
          </div>
          <div class="nbtn">工程设置</div>
          <div class="nbtn">绘图输入</div>
          <div class="tree">
            <div class="ttools">${ic("plus")}${ic("minus")}</div>
            <div class="tbody">
              <div class="tlist">
                ${TREE.map(([lv, label, icon, open, cls]) => lv === 0
                  ? html`<div class="tr lv0">${chev(!!open)}${ic(icon)}<span class="lb">${mix(label)}</span></div>`
                  : html`<div class="tr lv1 ${cls || ""}">${ic(icon)}<span class="lb">${mix(label)}</span>${label.startsWith("自定义线") ? html`<span class="newtag">NEW</span>` : ""}</div>`)}
              </div>
              <div class="tsb">
                <div class="sarrow"><svg width="9" height="6"><path d="M1 5l3.500-3.500L8 5" fill="none" stroke="#606060" stroke-width="1.600"/></svg></div>
                <div class="thumb"></div>
                <div class="tfill"></div>
                <div class="sarrow"><svg width="9" height="6"><path d="M1 1l3.500 3.500L8 1" fill="none" stroke="#606060" stroke-width="1.600"/></svg></div>
              </div>
            </div>
          </div>
          <div class="nbtn">单构件输入</div>
          <div class="nbtn">报表预览</div>
        </aside>
        <section class="work">
          <div class="row r2">${strips(R2, 189)}</div>
          <div class="row r3">${strips(R3, 189)}</div>
          <div class="row r4">${strips(R4, 189)}</div>
          <svg class="cv" width="1177" height="194" viewBox="189 168 1177 194" shape-rendering="crispEdges">${unsafeSVG(canvas())}</svg>
          <div class="row snap">${strips(SNAP, 189)}</div>
          <div class="tz">
            <div class="tdots">
              <svg width="10" height="10" viewBox="0 0 10 10"><rect x=".5" y=".5" width="9" height="9" fill="#eee" stroke="#666"/><path d="M2 2l6 6M8 2L2 8" stroke="#b04040"/></svg>
              <i></i>
            </div>
            <div class="tm">
              <div class="row ttb">${strips(TT, 202)}</div>
              <div class="twrap">
                <table>
                  <colgroup>${COLS.map((w) => html`<col style="width:${w}px">`)}</colgroup>
                  <thead>
                    <tr class="h1">
                      <th rowspan="2"></th><th rowspan="2" class="kh">跨号</th><th></th><th colspan="2">下部钢筋</th><th colspan="3">侧面钢筋</th>
                      <th rowspan="2">箍筋</th><th rowspan="2">肢数</th><th rowspan="2">次梁宽度</th><th rowspan="2">次梁加筋</th><th rowspan="2">吊筋</th><th rowspan="2">吊筋锚固</th><th rowspan="2">箍筋加密</th>
                    </tr>
                    <tr class="h2"><th>右支座钢筋</th><th>下通长筋</th><th>下部钢筋</th><th>侧面通长筋</th><th>侧面原位标注筋</th><th>拉筋</th></tr>
                  </thead>
                  <tbody>
                    ${ROWS.map((row, i) => html`<tr class=${i === 0 ? "on" : ""}>
                      <td class="rh">${mix(String(i + 1))}</td>
                      ${row.map((v, j) => html`<td class="${j === 0 ? "k" : ""} ${j === 7 ? "stir" : ""}">${mix(v)}</td>`)}
                    </tr>`)}
                  </tbody>
                </table>
                <i class="hd" style="left:71px"></i>
                <i class="hd2"></i>
              </div>
              <div class="hs">
                <span class="arr"><svg width="6" height="9"><path d="M5 1L1.500 4.500 5 8" fill="none" stroke="#555" stroke-width="1.600"/></svg></span>
                <div class="track"><div class="hsthumb"></div></div>
                <span class="arr"><svg width="6" height="9"><path d="M1 1l3.500 3.500L1 8" fill="none" stroke="#555" stroke-width="1.600"/></svg></span>
              </div>
            </div>
          </div>
        </section>
      </div>
      <div class="status">
        <div class="stc" style="width:148px"><span class="m">X=19188 Y=5974</span></div>
        <div class="stc" style="width:78px">${mix("层高:3.47m")}</div>
        <div class="stc" style="width:97px">${mix("底标高:-3.5m")}</div>
        <div class="stc" style="width:48px">${mix("1(1)")}</div>
        <div class="stc" style="width:986px">${mix("按鼠标左键选择梁图元,按右键或ESC退出;可以通过回车键及shift+”→←↑”光标键在跨之间、上下输入框之间进行切换")}</div>
      </div>
      <div class="task">
        <div class="start"><svg width="16" height="16" viewBox="0 0 16 16"><path d="M0 2.200l6.500-.9v6.200H0zM7.500 1.200L16 0v7.500H7.500zM0 8.500h6.500v6.200L0 13.800zM7.500 8.500H16V16l-8.500-1.200z" fill="#fff"/></svg></div>
        <div class="search"><i class="ring"></i><span>在这里输入你要搜索的内容</span>
          <svg width="10" height="18" viewBox="0 0 10 18"><rect x="2.500" y="1" width="5" height="10" rx="2.500" fill="none" stroke="#aaa"/><path d="M.5 8c0 6 9 6 9 0M5 13v4M2 17h6" fill="none" stroke="#aaa"/></svg>
        </div>
        ${this.taskIcons()}
        <div class="cpu"><span>17%</span><span>CPU使用</span></div>
        <div class="tray" style="width:14px"></div>
        <div class="tray" style="width:24px"><svg width="12" height="8"><path d="M1 7l5-6 5 6" fill="none" stroke="#fff" stroke-width="1.200"/></svg></div>
        <div class="tray" style="width:25px"><svg width="18" height="12" viewBox="0 0 18 12"><path d="M2 0v4M5 0v4M0 4h7v2H5v2H2V6H0z" fill="#fff"/><rect x="8" y="2" width="10" height="9" fill="none" stroke="#fff"/><rect x="10" y="4" width="6" height="5" fill="#ddd"/></svg></div>
        <div class="tray" style="width:23px"><svg width="14" height="14" viewBox="0 0 14 14"><path d="M1 13a12 12 0 0 1 12-12M4 13a9 9 0 0 1 9-9M7 13a6 6 0 0 1 6-6M10 13a3 3 0 0 1 3-3" fill="none" stroke="#bbb"/></svg></div>
        <div class="tray" style="width:23px"><svg width="15" height="14" viewBox="0 0 15 14"><path d="M1 5h3l4-4v12L4 9H1zM10 4c1.500 2 1.500 4 0 6M12 2c2.500 3 2.500 7 0 10" fill="none" stroke="#ddd"/></svg></div>
        <div class="tray" style="width:24px;font-size:14px">中</div>
        <div class="tray" style="width:34px"><svg width="16" height="18" viewBox="0 0 16 18"><rect x="1" y="1" width="14" height="16" rx="3" fill="#ee5a24" transform="rotate(-8 8 9)"/><path d="M11.500 5.500C9 4 5 4.500 5 7s6 1.500 6 4.500S7 14.500 4.500 13" fill="none" stroke="#fff" stroke-width="2"/></svg></div>
        <div class="clock"><span>15:11</span><span>2017/8/29</span></div>
        <div class="notif"><svg width="16" height="17" viewBox="0 0 16 17"><path d="M1 1h14v11h-5l-3 4v-4H1z" fill="#e8e8e8"/><path d="M3.500 4h9M3.500 6.500h9M3.500 9h6" stroke="#111"/></svg><span class="nbadge">2</span></div>
      </div>
      <div class="ime">
        <div class="sg">S</div>
        <div class="items"><span>英</span><span>，</span>
          <svg width="12" height="16" viewBox="0 0 12 16"><rect x="3.500" y="0" width="5" height="10" rx="2.500" fill="#2a80d8"/><path d="M1 7c0 6 10 6 10 0M6 12v3M3 15h6" fill="none" stroke="#2a80d8" stroke-width="1.400"/></svg>
          <svg width="16" height="14" viewBox="0 0 16 14"><rect x=".5" y="1" width="15" height="12" rx="1.500" fill="#2a80d8"/><path d="M3 4h10M3 7h10M5 10h6" stroke="#fff" stroke-dasharray="1.500 1"/></svg>
          <svg width="16" height="16" viewBox="0 0 16 16"><circle cx="6" cy="4" r="3" fill="#b8c4d2"/><path d="M1 14c0-8 10-8 10 0z" fill="#b8c4d2"/></svg>
          <svg width="15" height="14" viewBox="0 0 15 14"><path d="M4 0l3.500 2L11 0l4 3-2 3-1-.5V14H3V5.500L2 6 0 3z" fill="#1e78d2"/></svg>
          <svg width="15" height="15" viewBox="0 0 15 15"><path d="M2 14L8 7c-1-3 1-6 5-6l-2 3 2 2 2-2c0 4-3 6-6 5l-6 6z" fill="#1e78d2"/></svg>
        </div>
      </div>
      <div class="badge">73</div>
      <svg class="ann" width="1366" height="768" viewBox="0 0 1366 768" fill="none" stroke="#f00000" stroke-width="3">
        <ellipse cx="467" cy="262" rx="68" ry="38"/>
        <ellipse cx="1015.500" cy="450" rx="145" ry="46"/>
        <ellipse cx="815" cy="143" rx="47" ry="37"/>
      </svg>
    `;
  }

  taskIcons() {
    const items: [number, string, string][] = [
      [49, `<path d="M10 10c-6-1-8-4-7-7s6-2 7 7zM10 10c1-6 4-8 7-7s2 6-7 7zM10 10c6 1 8 4 7 7s-6 2-7-7zM10 10c-1 6-4 8-7 7s-2-6 7-7z" fill="#e8e8e8"/>`, ""],
      [49, `<path d="M15 4A8 8 0 1 0 17 12c0-3-3-5-6-4s-3 5 0 5" fill="none" stroke="#c8c8c8" stroke-width="1.500"/>`, ""],
      [25, "", "sep"],
      [49, `<path d="M2 11C2 5 6 1 11 1c5 0 8 4 8 9H7c0 4 6 5 11 2v5c-7 3-15 0-15-6zM7 8h7c0-4-6-4-7 0z" fill="#1577d8"/>`, ""],
      [48, `<path d="M3 5h14v14H3zM7 5c0-5 6-5 6 0" fill="#fff" stroke="#fff"/><path d="M7 9h2.500v2.500H7zM10.500 9H13v2.500h-2.500zM7 12.500h2.500V15H7zM10.500 12.500H13V15h-2.500z" fill="#111"/>`, ""],
      [49, `<path d="M1 3h7l2 2h9v14H1z" fill="#f0c040"/><path d="M1 8h18v11H1z" fill="#f8d765"/><rect x="7" y="11" width="6" height="8" fill="#2f9fe0"/>`, ""],
      [50, `<path d="M15 3C8 1 3 6 4 12c1 5 7 7 11 4 3-3 1-8-3-7-2 1-2 3-1 4" fill="none" stroke="#2a8fe0" stroke-width="3"/><path d="M4 16l4 3 3-2" fill="#d84060"/>`, "run"],
      [49, `<rect x="1" y="1" width="18" height="18" rx="3" fill="#1797e6"/><path d="M10 3v14M4 7c0 5 3 5 12 5M7 4v5" fill="none" stroke="#fff" stroke-width="2"/>`, "run act"],
      [49, `<rect x="1" y="1" width="18" height="18" rx="2" fill="#e89a20"/><rect x="4" y="3" width="12" height="14" fill="#f8efc8" transform="rotate(-8 10 10)"/><path d="M6 7h8M6 10h8M6 13h5" stroke="#a07030"/>`, "run"],
      [50, `<path d="M15 3C8 1 3 6 4 12c1 5 7 7 11 4 3-3 1-8-3-7-2 1-2 3-1 4" fill="none" stroke="#2a8fe0" stroke-width="3"/>`, "run"],
      [48, `<circle cx="10" cy="10" r="9" fill="#d0e8c0"/><circle cx="10" cy="10" r="6.500" fill="#56b83a"/><path d="M4 10h12M7 8l3-3 3 3" fill="none" stroke="#fff" stroke-width="1.500"/>`, "run"],
    ];
    return items.map(([w, s, cls]) => cls === "sep"
      ? html`<span class="ti" style="width:${w}px"><i class="tsep"></i></span>`
      : html`<span class="ti ${cls}" style="width:${w}px"><svg width="20" height="20" viewBox="0 0 20 20">${unsafeSVG(s)}</svg></span>`);
  }
}
